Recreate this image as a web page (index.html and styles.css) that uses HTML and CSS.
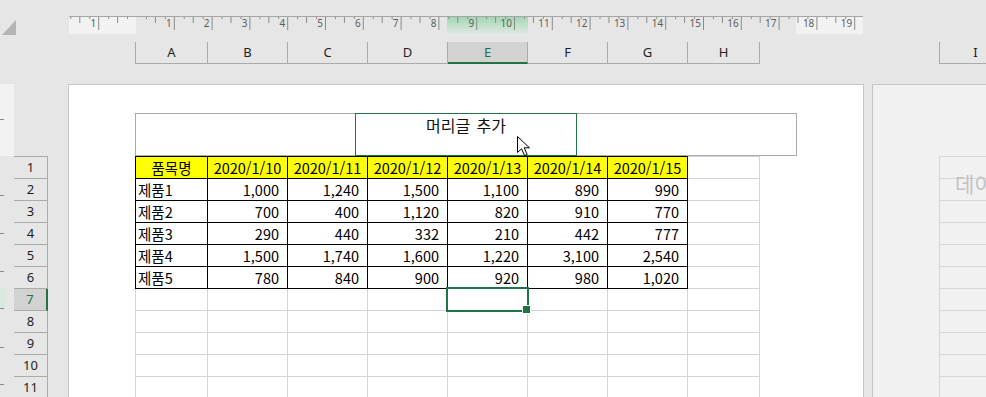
FILE: index.html
```html
<!DOCTYPE html>
<html lang="ko">
<head>
  <meta charset="UTF-8" />
  <title>페이지 레이아웃</title>
  <link rel="stylesheet" href="styles.css">
</head>
<body>

  <div class="topbar">
    <div class="corner-col"><div class="select-all"></div></div>
    <div class="rulers-col">
      <div class="hruler">
        <div class="ruler-margin"></div>
        <div class="ruler-body"></div>
        <div class="ruler-margin"></div>
        <svg class="ruler-ticks" width="794" height="17">
          <defs>
            <pattern id="cm" x="29.2" y="0" width="37.8" height="17" patternUnits="userSpaceOnUse">
              <path d="M0.5 0V13 M9.95 0V2 M19.4 0V6 M28.85 0V2" stroke="#8a8a8a" stroke-width="1" shape-rendering="crispEdges" />
            </pattern>
          </defs>
          <rect x="0" y="0" width="66" height="17" fill="url(#cm)" />
          <rect x="68" y="0" width="726" height="17" fill="url(#cm)" />
        </svg>
        <div class="ruler-labels">
          <span class="rl first">1</span><span class="rl"></span>
          <span class="rl">1</span><span class="rl">2</span><span class="rl">3</span><span class="rl">4</span>
          <span class="rl">5</span><span class="rl">6</span><span class="rl">7</span><span class="rl">8</span>
          <span class="rl">9</span><span class="rl">10</span><span class="rl">11</span><span class="rl">12</span>
          <span class="rl">13</span><span class="rl">14</span><span class="rl">15</span><span class="rl">16</span>
          <span class="rl">17</span><span class="rl">18</span><span class="rl">19</span>
        </div>
      </div>
      <div class="colheads">
        <div class="ch first">A</div>
        <div class="ch">B</div>
        <div class="ch">C</div>
        <div class="ch">D</div>
        <div class="ch on">E</div>
        <div class="ch">F</div>
        <div class="ch">G</div>
        <div class="ch last">H</div>
        <div class="ch-gap"></div>
        <div class="ch next">I</div>
      </div>
    </div>
  </div>

  <div class="main">
    <div class="vruler">
      <svg width="14" height="313">
        <rect x="0" y="0" width="14" height="72" fill="#f2f2f2" />
        <rect x="0" y="204" width="5" height="22" fill="#dbe8df" />
        <path d="M0 35.5H4 M0 111.5H4 M0 149.5H4 M0 187.5H4 M0 224.5H4 M0 263.5H4 M0 300.5H4" stroke="#8a8a8a" />
      </svg>
    </div>

    <div class="rowheads">
      <div class="rh">1</div>
      <div class="rh">2</div>
      <div class="rh">3</div>
      <div class="rh">4</div>
      <div class="rh">5</div>
      <div class="rh">6</div>
      <div class="rh on">7</div>
      <div class="rh">8</div>
      <div class="rh">9</div>
      <div class="rh">10</div>
      <div class="rh">11</div>
    </div>

    <div class="page">
      <div class="page-header">
        <div class="hf-side"></div>
        <div class="hf-center">머리글 추가</div>
        <div class="hf-side right"></div>
      </div>

      <table class="sheet">
        <colgroup>
          <col class="col-a"><col class="col-n"><col class="col-n"><col class="col-n">
          <col class="col-n"><col class="col-n"><col class="col-n"><col class="col-a">
        </colgroup>
        <tr>
          <td class="d hd">품목명</td>
          <td class="d hd">2020/1/10</td>
          <td class="d hd">2020/1/11</td>
          <td class="d hd">2020/1/12</td>
          <td class="d hd">2020/1/13</td>
          <td class="d hd">2020/1/14</td>
          <td class="d hd">2020/1/15</td>
          <td></td>
        </tr>
        <tr>
          <td class="d">제품1</td>
          <td class="d num">1,000</td><td class="d num">1,240</td><td class="d num">1,500</td>
          <td class="d num">1,100</td><td class="d num">890</td><td class="d num">990</td>
          <td></td>
        </tr>
        <tr>
          <td class="d">제품2</td>
          <td class="d num">700</td><td class="d num">400</td><td class="d num">1,120</td>
          <td class="d num">820</td><td class="d num">910</td><td class="d num">770</td>
          <td></td>
        </tr>
        <tr>
          <td class="d">제품3</td>
          <td class="d num">290</td><td class="d num">440</td><td class="d num">332</td>
          <td class="d num">210</td><td class="d num">442</td><td class="d num">777</td>
          <td></td>
        </tr>
        <tr>
          <td class="d">제품4</td>
          <td class="d num">1,500</td><td class="d num">1,740</td><td class="d num">1,600</td>
          <td class="d num">1,220</td><td class="d num">3,100</td><td class="d num">2,540</td>
          <td></td>
        </tr>
        <tr>
          <td class="d">제품5</td>
          <td class="d num">780</td><td class="d num">840</td><td class="d num">900</td>
          <td class="d num">920</td><td class="d num">980</td><td class="d num">1,020</td>
          <td></td>
        </tr>
        <tr><td></td><td></td><td></td><td></td><td class="sel"></td><td></td><td></td><td></td></tr>
        <tr><td></td><td></td><td></td><td></td><td></td><td></td><td></td><td></td></tr>
        <tr><td></td><td></td><td></td><td></td><td></td><td></td><td></td><td></td></tr>
        <tr><td></td><td></td><td></td><td></td><td></td><td></td><td></td><td></td></tr>
        <tr><td></td><td></td><td></td><td></td><td></td><td></td><td></td><td></td></tr>
        <tr><td></td><td></td><td></td><td></td><td></td><td></td><td></td><td></td></tr>
      </table>

      <!-- mouse pointer over the header -->
      <svg class="cursor" width="14" height="21" viewBox="0 0 14 21">
        <path d="M0.5 0.5V16.5L4.5 12.8L7.6 19.6L10.2 18.5L7.2 11.8H12.5Z" fill="#fff" stroke="#000" stroke-width="1" stroke-linejoin="miter" />
      </svg>
    </div>

    <div class="page next-page">
      <div class="ghost-grid">
        <div class="ghost-row"></div>
        <div class="ghost-row"></div>
        <div class="ghost-row"></div>
        <div class="ghost-row"></div>
        <div class="ghost-row"></div>
        <div class="ghost-row"></div>
        <div class="ghost-row"></div>
        <div class="ghost-row"></div>
        <div class="ghost-row"></div>
        <div class="ghost-row"></div>
        <div class="ghost-row"></div>
      </div>
      <div class="ghost-text">데이터를 추가하려면 클릭하세요</div>
    </div>
  </div>

</body>
</html>
```

FILE: styles.css
```css
* {
  box-sizing: border-box;
}

body {
  margin: 0;
  width: 986px;
  height: 397px;
  overflow: hidden;
  background: #e6e6e6;
  font-family: "Noto Sans", sans-serif;
  color: #1f1f1f;
}

/* top: select-all corner, ruler, column letters */
.topbar {
  display: flex;
  height: 84px;
}

.corner-col {
  width: 69px;
  flex: none;
}

.select-all {
  width: 0;
  height: 0;
  margin: 20px 0 0 2px;
  border-left: 14px solid transparent;
  border-bottom: 15px solid #b4b4b4;
}

.rulers-col {
  flex: none;
  width: 917px;
}

.hruler {
  position: relative;
  display: flex;
  width: 794px;
  height: 18px;
  margin-top: 16px;
  border-top: 1px solid #a6a6a6;
}

.ruler-margin {
  width: 67px;
  background: #f2f2f2;
}

.ruler-body {
  width: 660px;
  background: linear-gradient(#a2d8b4, #e1e7e2) 311px 0 / 81px 100% no-repeat;
}

.ruler-ticks {
  position: absolute;
  left: 0;
  top: 0;
}

/* one slot per centimetre, number sits just left of its tick */
.ruler-labels {
  position: absolute;
  left: 0;
  top: 0;
  display: flex;
  font-size: 10px;
  line-height: 12px;
  color: #5c5c5c;
}

.rl {
  flex: none;
  width: 37.8px;
  text-align: right;
  padding-right: 2px;
}

.rl.first {
  width: 29.2px;
}

.colheads {
  display: flex;
  height: 22px;
  margin: 8px 0 0 66px;
}

.ch {
  flex: none;
  width: 80px;
  border-right: 1px solid #ababab;
  border-bottom: 1px solid #ababab;
  text-align: center;
  font-size: 13px;
  line-height: 21px;
}

.ch.first {
  width: 73px;
  border-left: 1px solid #ababab;
}

.ch.last {
  width: 72px;
}

.ch.on {
  background: #d2d2d2;
  color: #217346;
  border-bottom: 2px solid #217346;
  line-height: 20px;
}

.ch-gap {
  flex: none;
  width: 179px;
}

.ch.next {
  width: 72px;
  border-left: 1px solid #ababab;
  border-right: 0;
}

/* body: vertical ruler, row numbers, pages */
.main {
  display: flex;
  height: 313px;
}

.vruler {
  flex: none;
  width: 14px;
}

.vruler svg {
  display: block;
}

.rowheads {
  flex: none;
  width: 34px;
  margin-top: 72px;
  border-top: 1px solid #ababab;
}

.rh {
  height: 22px;
  border-right: 1px solid #ababab;
  border-bottom: 1px solid #ababab;
  text-align: center;
  font-size: 13px;
  line-height: 21px;
}

.rh.on {
  background: #d2d2d2;
  color: #217346;
  border-right: 2px solid #217346;
}

.page {
  position: relative;
  flex: none;
  width: 796px;
  margin-left: 20px;
  background: #fff;
  border: 1px solid #c6c6c6;
  border-bottom: 0;
}

.page-header {
  display: flex;
  width: 662px;
  height: 43px;
  margin: 28px 0 0 66px;
}

.hf-side {
  width: 220px;
  border: 1px solid #ababab;
  border-right: 0;
}

.hf-side.right {
  border-left: 0;
  border-right: 1px solid #ababab;
}

.hf-center {
  width: 222px;
  border: 1px solid #217346;
  text-align: center;
  font-family: "Noto Sans CJK KR", sans-serif;
  font-size: 16px;
  line-height: 20px;
  word-spacing: 2px;
  padding-top: 1px;
  color: #111;
}

.sheet {
  border-collapse: collapse;
  table-layout: fixed;
  margin-left: 66px;
  font-family: "Noto Sans CJK KR", sans-serif;
  font-size: 14.5px;
  color: #000;
}

.sheet .col-a {
  width: 72px;
}

.sheet .col-n {
  width: 80px;
}

.sheet td {
  height: 22px;
  padding: 0 2px;
  border: 1px solid #d4d4d4;
  line-height: 20px;
  white-space: nowrap;
  overflow: hidden;
}

.sheet td.d {
  border-color: #000;
}

.sheet td.hd {
  background: #ffff00;
  text-align: center;
}

.sheet td.num {
  text-align: right;
  padding-right: 8px;
}

.sheet td.sel {
  position: relative;
  overflow: visible;
}

.sheet td.sel::before {
  content: "";
  position: absolute;
  left: -2px;
  top: -2px;
  right: -2px;
  bottom: -2px;
  border: 2px solid #217346;
}

.sheet td.sel::after {
  content: "";
  position: absolute;
  right: -4px;
  bottom: -4px;
  width: 7px;
  height: 7px;
  background: #217346;
  border: 1px solid #fff;
}

.cursor {
  position: absolute;
  left: 448px;
  top: 51px;
}

.next-page {
  flex: 1;
  width: auto;
  margin-left: 8px;
  background: #f1f1f1;
  border-right: 0;
}

.ghost-grid {
  margin: 71px 0 0 66px;
  border-top: 1px solid #d6d6d6;
  border-left: 1px solid #d6d6d6;
}

.ghost-row {
  height: 22px;
  border-bottom: 1px solid #d6d6d6;
}

.ghost-text {
  position: absolute;
  left: 82px;
  top: 84px;
  font-family: "Noto Sans CJK KR", sans-serif;
  font-size: 21px;
  line-height: 28px;
  color: #c3c3c3;
  white-space: nowrap;
}
```
